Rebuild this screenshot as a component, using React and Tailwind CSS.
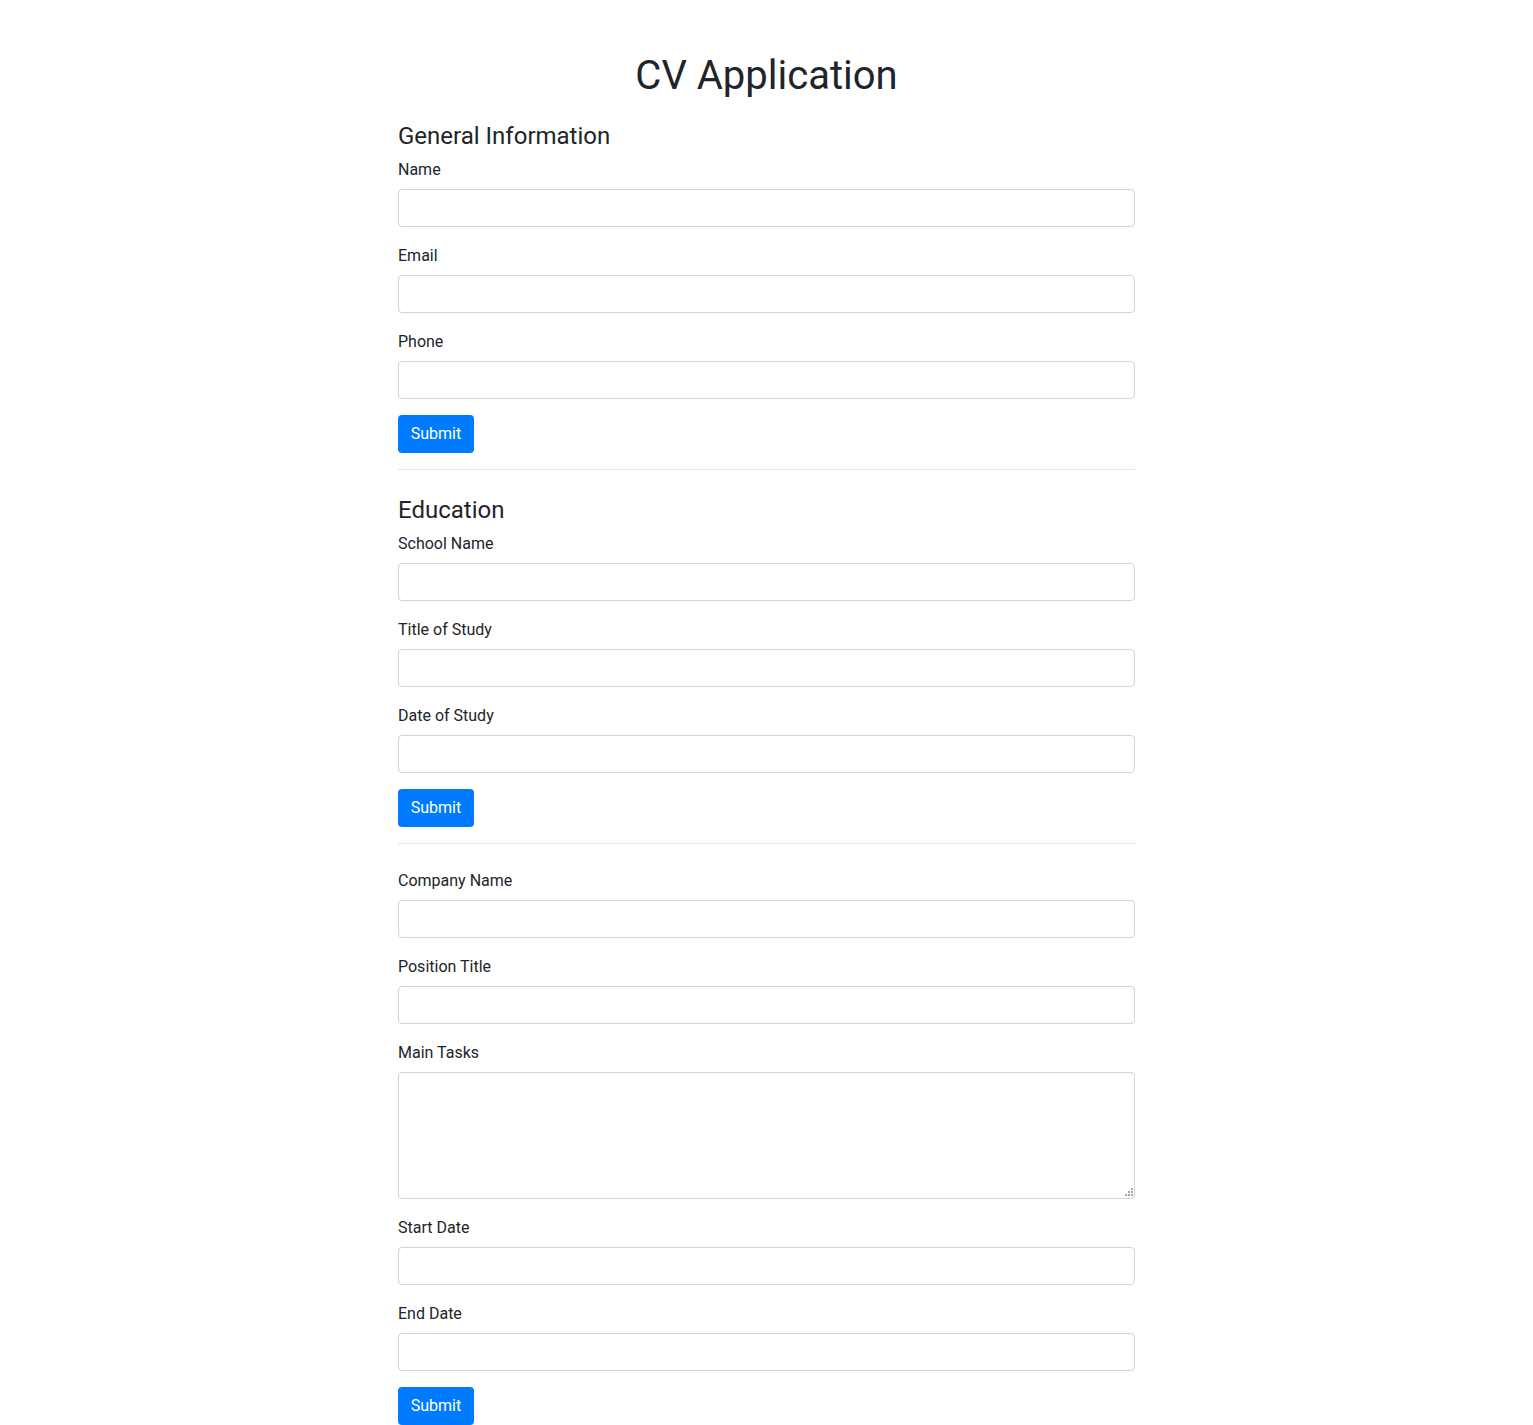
import React from 'react';

const fieldsGeneral = ['Name', 'Email', 'Phone'];
const fieldsEducation = ['School Name', 'Title of Study', 'Date of Study'];

// Pole formularza z etykietą
const Field = ({ label, area }) => (
  <div className="mb-4">
    <label className="block mb-2 pt-px text-base leading-[23px]">{label}</label>
    {area ? (
      <div className="relative">
        <textarea className="block w-full h-[127px] border border-[#ced4da] rounded-[4px] bg-white px-3 py-1.5 outline-none resize-none" />
        {/* uchwyt zmiany rozmiaru */}
        <svg className="absolute right-[2px] bottom-[3px]" width="9" height="9" viewBox="0 0 9 9">
          <rect x="7" y="1" width="2" height="2" fill="#a8a8a8" />
          <rect x="4" y="4" width="2" height="2" fill="#a8a8a8" />
          <rect x="7" y="4" width="2" height="2" fill="#a8a8a8" />
          <rect x="1" y="7" width="2" height="2" fill="#a8a8a8" />
          <rect x="4" y="7" width="2" height="2" fill="#a8a8a8" />
          <rect x="7" y="7" width="2" height="2" fill="#a8a8a8" />
        </svg>
      </div>
    ) : (
      <input type="text" className="block w-full h-[38px] border border-[#ced4da] rounded-[4px] bg-white px-3 outline-none" />
    )}
  </div>
);

const SubmitButton = () => (
  <button className="flex items-center justify-center w-[76px] h-[38px] text-base text-white bg-[#007bff] rounded-[4px]">
    Submit
  </button>
);

const App = () => {
  return (
    <div
      className="min-h-screen bg-white text-[#212529] pt-[52px]"
      style={{ fontFamily: 'Roboto, "Noto Sans", sans-serif' }}
    >
      <div className="flex flex-col w-[737px] mx-auto">
        <h1 className="text-center text-[40px] leading-[48px] font-normal mb-[12px]">CV Application</h1>

        {/* Dane ogólne */}
        <h4 className="mt-[10px] mb-[6px] text-[24px] leading-[29px] font-normal">General Information</h4>
        {fieldsGeneral.map((f) => <Field key={f} label={f} />)}
        <SubmitButton />
        <hr className="my-4 border-t border-black/10" />

        {/* Edukacja */}
        <h4 className="mt-[10px] mb-[6px] text-[24px] leading-[29px] font-normal">Education</h4>
        {fieldsEducation.map((f) => <Field key={f} label={f} />)}
        <SubmitButton />
        <hr className="my-4 border-t border-black/10" />

        {/* Doświadczenie */}
        <h4 className="mb-2 h-0"></h4>
        <Field label="Company Name" />
        <Field label="Position Title" />
        <Field label="Main Tasks" area />
        <Field label="Start Date" />
        <Field label="End Date" />
        <SubmitButton />
      </div>
    </div>
  );
};

export default App;
